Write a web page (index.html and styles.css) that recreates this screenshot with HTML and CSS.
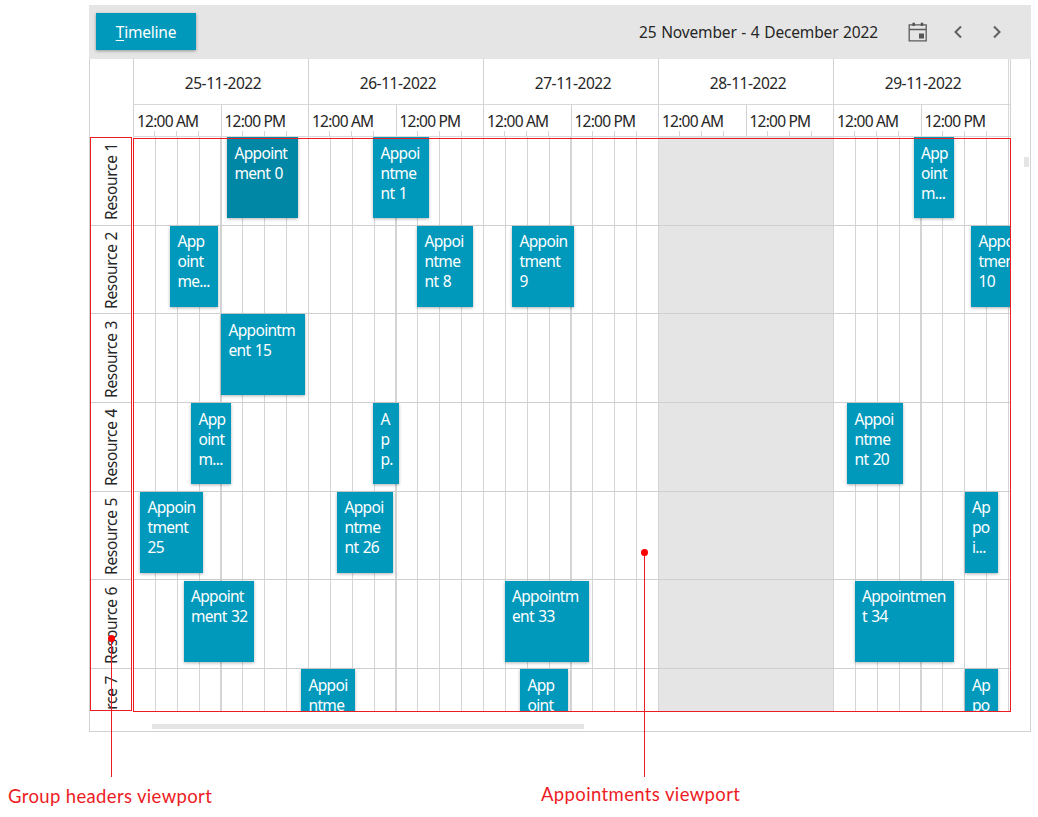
FILE: index.html
```html
<!DOCTYPE html>
<html lang="en">
<head>
<meta charset="utf-8">
<title>Timeline</title>
<link rel="stylesheet" href="styles.css">
</head>
<body>
<main class="page">
  <section class="scheduler">
    <header class="toolbar">
      <button class="view-button"><span><u>T</u>imeline</span></button>
      <span class="range">25 November - 4 December 2022</span>
      <svg class="icon calendar" width="20" height="22" viewBox="0 0 20 22">
        <path class="stroke" d="M1.2 3.8H18.2V19.8H1.2ZM1.2 8.5H18.2"/>
        <path class="solid" d="M11 12.5h5v5h-5zM4.4 1.8h2.6v3.2h-2.6zM12.7 1.8h2.6v3.2h-2.6z"/>
      </svg>
      <svg class="icon prev" width="10" height="14" viewBox="0 0 10 14"><path class="chevron" d="M8 1.5L2.5 7L8 12.5"/></svg>
      <svg class="icon next" width="10" height="14" viewBox="0 0 10 14"><path class="chevron" d="M2 1.5L7.5 7L2 12.5"/></svg>
    </header>
    <div class="content">
      <div class="corner"></div>
      <div class="time-header">
        <div class="days"><div class="day">25-11-2022</div><div class="day">26-11-2022</div><div class="day">27-11-2022</div><div class="day">28-11-2022</div><div class="day">29-11-2022</div></div>
        <div class="hours"><div class="hour">12:00 AM</div><div class="hour">12:00 PM</div><div class="hour">12:00 AM</div><div class="hour">12:00 PM</div><div class="hour">12:00 AM</div><div class="hour">12:00 PM</div><div class="hour">12:00 AM</div><div class="hour">12:00 PM</div><div class="hour">12:00 AM</div><div class="hour">12:00 PM</div></div>
      </div>
      <div class="side"><div class="v-thumb"></div></div>
      <div class="groups">
        <div class="group"><span>Resource 1</span></div>
        <div class="group"><span>Resource 2</span></div>
        <div class="group"><span>Resource 3</span></div>
        <div class="group"><span>Resource 4</span></div>
        <div class="group"><span>Resource 5</span></div>
        <div class="group"><span>Resource 6</span></div>
        <div class="group"><span>Resource 7</span></div>
      </div>
      <div class="viewport">
        <div class="grid-row"><div class="holiday"></div></div>
        <div class="grid-row"><div class="holiday"></div></div>
        <div class="grid-row"><div class="holiday"></div></div>
        <div class="grid-row"><div class="holiday"></div></div>
        <div class="grid-row"><div class="holiday"></div></div>
        <div class="grid-row"><div class="holiday"></div></div>
        <div class="grid-row"><div class="holiday"></div></div>
        <div class="appt selected" style="--x:94;--r:0;--w:70.5">Appoint<br>ment 0</div>
        <div class="appt" style="--x:240;--r:0;--w:55.5">Appoi<br>ntme<br>nt 1</div>
        <div class="appt" style="--x:780.5;--r:0;--w:40">App<br>oint<br>m...</div>
        <div class="appt" style="--x:37;--r:1;--w:47.5">App<br>oint<br>me...</div>
        <div class="appt" style="--x:284;--r:1;--w:55.5">Appoi<br>ntme<br>nt 8</div>
        <div class="appt" style="--x:379;--r:1;--w:62">Appoin<br>tment<br>9</div>
        <div class="appt" style="--x:838;--r:1;--w:62">Appoin<br>tment<br>10</div>
        <div class="appt" style="--x:88;--r:2;--w:84">Appointm<br>ent 15</div>
        <div class="appt" style="--x:58;--r:3;--w:40">App<br>oint<br>m...</div>
        <div class="appt" style="--x:240;--r:3;--w:25.5">A<br>p<br>p.</div>
        <div class="appt" style="--x:714;--r:3;--w:55.5">Appoi<br>ntme<br>nt 20</div>
        <div class="appt" style="--x:7;--r:4;--w:62.5">Appoin<br>tment<br>25</div>
        <div class="appt" style="--x:204;--r:4;--w:55.5">Appoi<br>ntme<br>nt 26</div>
        <div class="appt" style="--x:831.5;--r:4;--w:33">Ap<br>po<br>i...</div>
        <div class="appt" style="--x:50.5;--r:5;--w:70">Appoint<br>ment 32</div>
        <div class="appt" style="--x:371.5;--r:5;--w:84">Appointm<br>ent 33</div>
        <div class="appt" style="--x:721.5;--r:5;--w:99">Appointmen<br>t 34</div>
        <div class="appt" style="--x:168;--r:6;--w:54">Appoi<br>ntme</div>
        <div class="appt" style="--x:387;--r:6;--w:47.5">App<br>oint</div>
        <div class="appt" style="--x:831.5;--r:6;--w:33">Ap<br>po</div>
      </div>
      <div class="scroll-row"><div class="h-thumb"></div></div>
    </div>
  </section>
  <div class="outline outline-groups"></div>
  <div class="outline outline-appts"></div>
  <div class="pointer pointer-groups"></div>
  <div class="pointer pointer-appts"></div>
  <footer class="captions"><span class="caption-groups">Group headers viewport</span><span class="caption-appts">Appointments viewport</span></footer>
</main>
</body>
</html>
```
FILE: styles.css
```css
* { box-sizing: border-box; }
body { margin: 0; background: #fff; }
.page {
  position: relative;
  width: 1038px;
  height: 817px;
  padding: 5px 0 0 89px;
  overflow: hidden;
  font: 15.5px/20px "Noto Sans", "Open Sans", sans-serif;
  color: #262626;
}
.scheduler { width: 942px; height: 727px; border: 1px solid #d2d2d2; border-top: 0; }
.toolbar {
  display: flex;
  align-items: center;
  height: 54px;
  margin: 0 -1px;
  padding: 0 29px 0 7px;
  background: #e5e5e5;
}
.view-button {
  width: 100px;
  height: 37px;
  margin-top: -1px;
  padding: 0;
  border: 0;
  background: #0099bc;
  box-shadow: 0 1px 3px rgba(0, 0, 0, .35);
  color: #fff;
  font: inherit;
  letter-spacing: -.2px;
}
.view-button u { text-underline-offset: 2px; text-decoration-thickness: 1px; }
.range {
  margin: -1px 0 0 auto;
  letter-spacing: -.15px;
  word-spacing: .8px;
}
.icon { flex: none; fill: none; }
.calendar { margin: -1px 0 0 30px; }
.prev { margin-left: 25px; }
.next { margin-left: 29px; }
.stroke { stroke: #5b5b5b; stroke-width: 1.3; }
.solid { fill: #555; }
.chevron { stroke: #606060; stroke-width: 2; }

.content {
  display: grid;
  grid-template-columns: 43px 878px 19px;
  grid-template-rows: 78px 574px 20px;
}
.time-header {
  overflow: hidden;
  border-right: 1px solid #d2d2d2;
  border-bottom: 1px solid #d8d8d8;
}
.days, .hours { display: flex; width: 1050px; }
.day {
  width: 175px;
  height: 46px;
  flex: none;
  padding: 14px 0 0 4px;
  border-left: 1px solid #d2d2d2;
  border-bottom: 1px solid #d8d8d8;
  letter-spacing: -.45px;
  text-align: center;
}
.days::after { content: ""; width: 10px; border-left: 1px solid #d8d8d8; border-bottom: 1px solid #d8d8d8; }
.hour {
  width: 87.5px;
  height: 31px;
  flex: none;
  padding: 6px 0 0 3px;
  border-left: 1px solid #d2d2d2;
  background: repeating-linear-gradient(90deg, transparent 0 20.4px, #d5d5d5 20.4px 21.4px, transparent 21.4px 21.875px) 0 100% / 80px 5px no-repeat;
  letter-spacing: -.78px;
  white-space: nowrap;
}
.hours::after { content: ""; border-left: 1px solid #d8d8d8; }
.side { position: relative; }
.v-thumb { position: absolute; left: 13px; top: 98px; width: 5px; height: 10px; background: #e5e5e5; }
.groups { overflow: hidden; border-right: 1px solid transparent; }
.group {
  display: flex;
  align-items: center;
  justify-content: center;
  height: 88.7px;
  border-bottom: 1px solid #cfcfcf;
}
.group span {
  writing-mode: vertical-rl;
  transform: rotate(180deg);
  padding: 0 0 2px 1px;
  letter-spacing: -.3px;
  white-space: nowrap;
}
.viewport { position: relative; overflow: hidden; }
.grid-row {
  height: 88.7px;
  padding-left: 525px;
  border-bottom: 1px solid #cfcfcf;
  background: repeating-linear-gradient(90deg, #d4d4d4 0 1.1px, transparent 1.1px 21.875px);
}
.holiday { width: 175px; height: 100%; background: #e5e5e5; border-left: 1px solid #d4d4d4; }
.appt {
  position: absolute;
  left: calc(var(--x) * 1px);
  top: calc(var(--r) * 88.7px);
  width: calc(var(--w) * 1px);
  height: 81px;
  padding: 5.5px 0 0 7.5px;
  overflow: hidden;
  background: #0099bc;
  box-shadow: 0 1px 3px rgba(0, 0, 0, .3);
  color: #fff;
  letter-spacing: -.68px;
  word-spacing: 1px;
  white-space: nowrap;
}
.selected { background: #0087a6; }
.scroll-row { grid-column: 1 / -1; padding: 13px 0 0 62px; }
.h-thumb { width: 432px; height: 5px; background: #e5e5e5; }

/* Annotations lying over the scheduler */
.outline { position: absolute; border: 1px solid #ed1c24; }
.outline-groups { left: 90px; top: 137px; width: 42px; height: 574px; }
.outline-appts { left: 133px; top: 138px; width: 878px; height: 574px; }
.pointer { position: absolute; width: 1px; background: #ed1c24; }
.pointer-groups { left: 111px; top: 638px; height: 139px; }
.pointer-appts { left: 644px; top: 552px; height: 225px; }
.pointer::before {
  content: "";
  position: absolute;
  left: -3px;
  top: -3px;
  width: 7px;
  height: 7px;
  border-radius: 50%;
  background: #f00;
}
.captions {
  display: flex;
  margin: 52px 0 0 -81px;
  color: #ed1c24;
  font: 18.5px/24px Lato, sans-serif;
  white-space: nowrap;
}
.caption-groups { width: 533px; letter-spacing: .35px; }
.caption-appts { margin-top: -2px; letter-spacing: .37px; }
```
